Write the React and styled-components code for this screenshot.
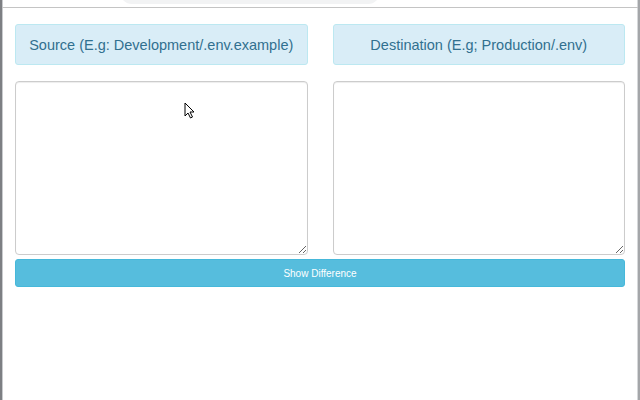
import React from 'react';
import styled, { createGlobalStyle } from 'styled-components';

const GlobalStyle = createGlobalStyle`
  html, body {
    margin: 0;
    padding: 0;
    background: #fff;
  }
  body {
    font-family: "Liberation Sans", Arial, sans-serif;
  }
`;

const Frame = styled.div`
  position: relative;
  height: 400px;
  box-sizing: border-box;
  border-left: 2px solid #7d7f83;
  border-right: 2px solid #a4a6a9;
  box-shadow: inset 1px 0 0 #c9cbce, inset -1px 0 0 #d6d8da;
  overflow: hidden;
`;

const TopBar = styled.div`
  height: 7px;
  border-bottom: 1px solid #c4c4c4;
  overflow: hidden;
  padding-left: 118px;
`;

const Pill = styled.div`
  width: 260px;
  height: 24px;
  margin-top: -20px;
  border-radius: 12px;
  background: #f2f3f4;
`;

const Content = styled.div`
  padding: 16px 13px 0 13px;
`;

const Row = styled.div`
  display: grid;
  grid-template-columns: 1fr 1fr;
  column-gap: 25px;
`;

const Label = styled.div`
  height: 41px;
  box-sizing: border-box;
  display: flex;
  align-items: center;
  justify-content: center;
  background: #d9edf7;
  border: 1px solid #bce8f1;
  border-radius: 3px;
  color: #31708f;
  font-size: 14.5px;
  white-space: nowrap;
`;

const TextArea = styled.textarea`
  display: block;
  width: 100%;
  height: 174px;
  margin-top: 16px;
  box-sizing: border-box;
  border: 1px solid #cccccc;
  border-radius: 4px;
  box-shadow: inset 0 1px 1px rgba(0, 0, 0, 0.075);
  background: #fff;
  resize: vertical;
  font-family: "Liberation Sans", Arial, sans-serif;
  outline: none;
`;

const Button = styled.button`
  display: block;
  width: 100%;
  height: 28px;
  margin-top: 4px;
  box-sizing: border-box;
  background: #56bddd;
  border: 1px solid #46b8da;
  border-radius: 3px;
  color: #fff;
  font-family: "Liberation Sans", Arial, sans-serif;
  font-size: 10px;
  cursor: pointer;
`;

const Cursor = styled.svg`
  position: absolute;
  left: 182px;
  top: 102px;
  pointer-events: none;
`;

export default function App() {
  return (
    <>
      <GlobalStyle />
      <Frame>
        <TopBar>
          <Pill />
        </TopBar>
        <Content>
          <Row>
            <Label>Source (E.g: Development/.env.example)</Label>
            <Label>Destination (E.g; Production/.env)</Label>
          </Row>
          <Row>
            <TextArea />
            <TextArea />
          </Row>
          <Button>Show Difference</Button>
        </Content>
        <Cursor width="12" height="18" viewBox="0 0 12 18">
          <path
            d="M1 1 L1 14 L4 11 L6.5 16 L8.5 15 L6 10 L10 10 Z"
            fill="#fff"
            stroke="#000"
            strokeWidth="1"
            strokeLinejoin="round"
          />
        </Cursor>
      </Frame>
    </>
  );
}
